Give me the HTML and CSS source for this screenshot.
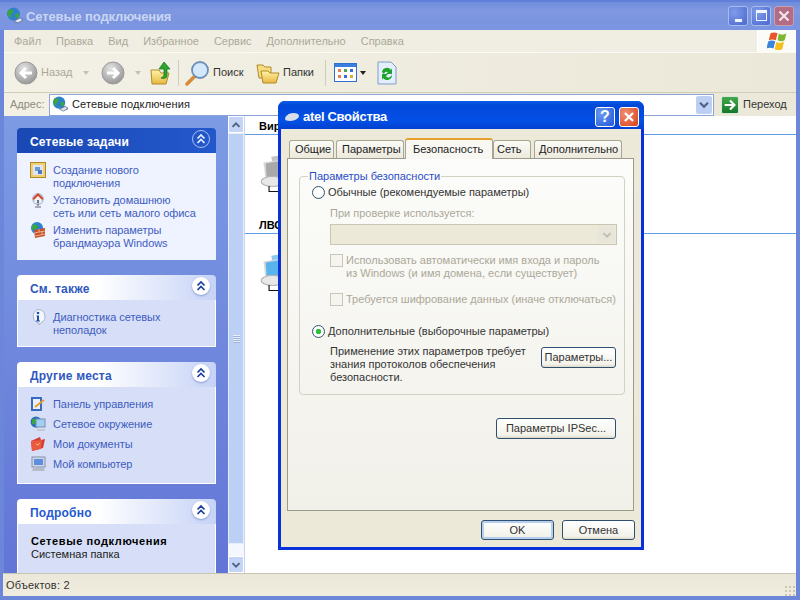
FILE: index.html
```html
<!DOCTYPE html>
<html lang="ru">
<head>
<meta charset="utf-8">
<title>Сетевые подключения</title>
<link rel="stylesheet" href="styles.css">
</head>
<body>
<svg class="defs" width="0" height="0" aria-hidden="true">
  <defs>
    <linearGradient id="gFolder" x1="0" y1="0" x2="0" y2="1"><stop offset="0" stop-color="#fff3a8"/><stop offset="1" stop-color="#e8b840"/></linearGradient>
    <radialGradient id="gGrey" cx=".4" cy=".3" r=".8"><stop offset="0" stop-color="#e4e4e4"/><stop offset="1" stop-color="#8e8e8e"/></radialGradient>
    <symbol id="net" viewBox="0 0 18 18">
      <path d="M6 12l9 3 2-1-1-2-7-3z" fill="#8ea0c8"/>
      <circle cx="7.500" cy="7" r="6.500" fill="#2f7fd0"/>
      <path d="M3 3c3-2 5 0 4 2S4 7 5 10 2 9 1.500 7 2 4 3 3zM9 7c2-1 4-1 4 1s-2 4-3 3 0-2-1-4z" fill="#36a83a"/>
      <path d="M8 14l6-3 3 2-5 3z" fill="#dfe6f2" stroke="#51627f" stroke-width=".7"/>
    </symbol>
    <symbol id="chev" viewBox="0 0 18 18">
      <path d="M5.500 8.500L9 5l3.500 3.500M5.500 13L9 9.500l3.500 3.500" fill="none" stroke="currentColor" stroke-width="1.700"/>
    </symbol>
    <symbol id="comp" viewBox="0 0 34 36">
      <path d="M11 4l18-3 3 1v16l-18 3z" fill="currentColor" opacity=".7"/>
      <path d="M4 9l19-3 2 1v16l-19 3z" fill="#d9d9d9"/>
      <path d="M6 10l17-3v15L7 25z" fill="currentColor"/>
      <ellipse cx="12" cy="26" rx="10" ry="4.500" fill="#e8e8e8" stroke="#b5b5b5"/>
      <path d="M9 30v5h25" fill="none" stroke="#111" stroke-width="1"/>
    </symbol>
  </defs>
</svg>

<div class="window">
  <header class="titlebar">
    <svg class="ico18"><use href="#net"/></svg>
    <span class="title-text">Сетевые подключения</span>
    <div class="winbtns">
      <span class="wb wb-blue"><i class="min-glyph"></i></span>
      <span class="wb wb-blue"><i class="max-glyph"></i></span>
      <span class="wb wb-red">
        <svg width="18" height="18" viewBox="0 0 18 18"><path d="M4.500 4.500l9 9M13.500 4.500l-9 9" stroke="#f2e6ea" stroke-width="2.200"/></svg>
      </span>
    </div>
  </header>

  <nav class="menubar">
    <div class="menus">
      <span>Файл</span><span>Правка</span><span>Вид</span><span>Избранное</span><span>Сервис</span><span>Дополнительно</span><span>Справка</span>
    </div>
    <div class="logo">
      <svg width="20" height="19" viewBox="0 2 17 16">
        <path d="M3 3c2-1 4-1 6 0l-1.500 6c-2-1-4-1-6 0z" fill="#e8562a"/>
        <path d="M10 3.500c2 1 4 1 6.500-.5L15 9c-2 1-4 1-6 0z" fill="#7cb82f"/>
        <path d="M1 10c2-1 4-1 6 0l-1.500 6c-2-1-4-1-6 0z" fill="#3c85d8"/>
        <path d="M8 10.500c2 1 4 1 6.500-.5L13 16.500c-2 1-4 1-6.500 0z" fill="#f5bf1e"/>
      </svg>
    </div>
  </nav>

  <div class="toolbar">
    <span class="tb-item tb-back">
      <svg width="24" height="24" viewBox="0 0 24 24"><circle cx="12" cy="12" r="11" fill="url(#gGrey)" stroke="#9a9a9a"/><path d="M18 12H8M12 7l-5 5 5 5" fill="none" stroke="#fff" stroke-width="3"/></svg>
      <span class="tb-dim">Назад</span><i class="caret caret-dim"></i>
    </span>
    <span class="tb-item tb-fwd">
      <svg width="24" height="24" viewBox="0 0 24 24"><circle cx="12" cy="12" r="11" fill="url(#gGrey)" stroke="#9a9a9a"/><path d="M6 12h10M12 7l5 5-5 5" fill="none" stroke="#fff" stroke-width="3"/></svg>
      <i class="caret caret-dim"></i>
    </span>
    <span class="tb-item tb-up">
      <svg width="22" height="24" viewBox="0 0 22 24"><path d="M1 9h8l2 3h8l-3 11H2z" fill="url(#gFolder)" stroke="#b08a28"/><path d="M14 1l6 7h-3v7c0 2-3 3-6 2 2-1 3-2 3-4V8H9z" fill="#2ba52b" stroke="#14701a" stroke-width=".7"/></svg>
    </span>
    <i class="tb-sep"></i>
    <span class="tb-item tb-search">
      <svg width="26" height="26" viewBox="0 0 26 26"><path d="M2 24l8-8" stroke="#d98a38" stroke-width="3.500" stroke-linecap="round"/><circle cx="15" cy="10" r="8" fill="#d3e9fb" stroke="#6d8fb8" stroke-width="1.800"/></svg>
      <span>Поиск</span>
    </span>
    <span class="tb-item tb-folders">
      <svg width="24" height="22" viewBox="0 0 24 22"><path d="M1 3h6l2 2h6v11H3z" fill="#f6dd80" stroke="#b08a28"/><path d="M5 9h7l2 2h9l-3 10H7z" fill="url(#gFolder)" stroke="#b08a28"/></svg>
      <span>Папки</span>
    </span>
    <i class="tb-sep"></i>
    <span class="tb-item tb-views">
      <svg width="23" height="19" viewBox="0 0 23 19"><rect x=".5" y=".5" width="22" height="18" fill="#fff" stroke="#2f6fd0"/><rect x="1" y="1" width="21" height="3" fill="#3a7fe0"/><g fill="#e8804a"><rect x="4" y="6" width="3" height="3"/><rect x="4" y="12" width="3" height="3"/></g><g fill="#4aa84a"><rect x="10" y="6" width="3" height="3"/></g><g fill="#3a6fd0"><rect x="16" y="6" width="3" height="3"/><rect x="10" y="12" width="3" height="3"/></g><rect x="16" y="12" width="3" height="3" fill="#d8b030"/></svg>
      <i class="caret"></i>
    </span>
    <span class="tb-item tb-sync">
      <svg width="20" height="24" viewBox="0 0 20 24"><path d="M1 1h13l5 5v17H1z" fill="#e4eefc" stroke="#7f9cc8"/><path d="M5 11a5 5 0 0 1 9-2l1-2v6h-6l2-2a3 3 0 0 0-4 2zM15 14a5 5 0 0 1-9 3l-1 2v-6h6l-2 2a3 3 0 0 0 4 1z" fill="#1fa32a"/></svg>
    </span>
  </div>

  <div class="addressbar">
    <span class="addr-label">Адрес:</span>
    <div class="addr-field">
      <svg class="ico16"><use href="#net"/></svg>
      <span class="addr-text">Сетевые подключения</span>
      <span class="addr-drop"><svg width="16" height="16" viewBox="0 0 18 18"><path d="M4.500 6.500L9 11l4.500-4.500" fill="none" stroke="#4d6185" stroke-width="2.400"/></svg></span>
    </div>
    <span class="go-btn"><svg width="16" height="16" viewBox="0 0 18 18"><path d="M3 9h11M9 4l5 5-5 5" fill="none" stroke="#fff" stroke-width="2.400"/></svg></span>
    <span class="go-label">Переход</span>
  </div>

  <main class="main">
    <aside class="sidebar">
      <section class="panel panel-primary">
        <div class="panel-head"><span class="panel-title">Сетевые задачи</span><span class="collapse"><svg width="18" height="18"><use href="#chev"/></svg></span></div>
        <ul class="panel-body task-list">
          <li>
            <svg class="task-ico" viewBox="0 0 16 16"><rect x=".5" y=".5" width="15" height="15" fill="#f0d070" stroke="#b08a28"/><rect x="3" y="3" width="10" height="10" fill="#dce6f8"/><path d="M5 5h5v4H5z" fill="#6f98d8"/><path d="M8 8h4v4H8z" fill="#4f78c0"/></svg>
            <span>Создание нового<br>подключения</span>
          </li>
          <li>
            <svg class="task-ico" viewBox="0 0 16 16"><circle cx="8" cy="7" r="6" fill="#b8c4d8"/><path d="M8 1L2.500 6.500 4 8l4-4 4 4 1.500-1.500z" fill="#d8442a"/><path d="M4.500 7.500L8 4l3.500 3.500V11h-7z" fill="#f4f0e8"/><rect x="7" y="8" width="2" height="3" fill="#5a78b0"/><path d="M8 12v2M5 15h6" stroke="#667" stroke-width="1.200"/></svg>
            <span>Установить домашнюю<br>сеть или сеть малого офиса</span>
          </li>
          <li>
            <svg class="task-ico" viewBox="0 0 16 16"><circle cx="7" cy="6" r="6" fill="#2f7fd0"/><path d="M2 3c3-1 6 0 6 2s-3 2-6 3z" fill="#3aa83e"/><path d="M4 8l11-2v8L5 16z" fill="#c8502c"/><path d="M4 11l11-2M5 14l10-2M9 7v3M12 9v3" stroke="#f0c8a0" stroke-width=".8"/></svg>
            <span>Изменить параметры<br>брандмауэра Windows</span>
          </li>
        </ul>
      </section>

      <section class="panel">
        <div class="panel-head"><span class="panel-title">См. также</span><span class="collapse"><svg width="18" height="18"><use href="#chev"/></svg></span></div>
        <ul class="panel-body task-list">
          <li>
            <svg class="task-ico" viewBox="0 0 16 16"><path d="M8 .5a7 7 0 0 1 3 13.300L9 16v-2A7 7 0 0 1 8 .5z" fill="#f4f6fb" stroke="#a8b4cc"/><circle cx="8" cy="4" r="1.300" fill="#1c4fa8"/><path d="M6.500 6.500H9v5h1v1H6v-1h1v-4h-.5z" fill="#1c4fa8"/></svg>
            <span>Диагностика сетевых<br>неполадок</span>
          </li>
        </ul>
      </section>

      <section class="panel">
        <div class="panel-head"><span class="panel-title">Другие места</span><span class="collapse"><svg width="18" height="18"><use href="#chev"/></svg></span></div>
        <ul class="panel-body task-list places">
          <li>
            <svg class="task-ico" viewBox="0 0 16 16"><rect x="1" y="1" width="11" height="14" fill="#3a6ac0"/><rect x="3" y="3" width="7" height="10" fill="#e8eefa"/><path d="M5 11l9-7" stroke="#e0a030" stroke-width="2"/></svg>
            <span>Панель управления</span>
          </li>
          <li>
            <svg class="task-ico" viewBox="0 0 16 16"><circle cx="6" cy="6" r="5.500" fill="#2a6ec0"/><path d="M2 3c3-1 5 0 4 3s-3 2-4 2z" fill="#38a63c"/><rect x="6" y="3" width="9" height="8" fill="#9fd0f4" stroke="#7a90b0"/><path d="M7 13h8v2H7z" fill="#c4c8d0"/></svg>
            <span>Сетевое окружение</span>
          </li>
          <li>
            <svg class="task-ico" viewBox="0 0 16 16"><path d="M1 5l9-4 1 3 4-1-2 9-11 3z" fill="#d83a34"/><path d="M1 5l11-1-1 9-9 2z" fill="#ea5a40"/><path d="M6 8l2 1 2-2" stroke="#f6c65a" fill="none"/></svg>
            <span>Мои документы</span>
          </li>
          <li>
            <svg class="task-ico" viewBox="0 0 16 16"><rect x="2" y="1" width="13" height="10" fill="#cfd6e6" stroke="#8490ac"/><rect x="4" y="3" width="9" height="6" fill="#5f8fdc"/><path d="M3 12h11l1 3H2z" fill="#b4bac8"/></svg>
            <span>Мой компьютер</span>
          </li>
        </ul>
      </section>

      <section class="panel panel-last">
        <div class="panel-head"><span class="panel-title panel-title-details">Подробно</span><span class="collapse"><svg width="18" height="18"><use href="#chev"/></svg></span></div>
        <div class="panel-body details">
          <strong>Сетевые подключения</strong>
          <span>Системная папка</span>
        </div>
      </section>
    </aside>

    <div class="scrollbar">
      <span class="sb-btn"><svg width="16" height="16" viewBox="0 0 18 18"><path d="M4.500 11.500L9 7l4.500 4.500" fill="none" stroke="#4d6185" stroke-width="2.400"/></svg></span>
      <div class="sb-thumb"><i class="grip"></i></div>
      <div class="sb-track"></div>
      <span class="sb-btn"><svg width="16" height="16" viewBox="0 0 18 18"><path d="M4.500 6.500L9 11l4.500-4.500" fill="none" stroke="#4d6185" stroke-width="2.400"/></svg></span>
    </div>

    <div class="content">
      <h3 class="group-head">Вир</h3>
      <div class="group-item"><svg class="comp comp-grey" width="38" height="41"><use href="#comp"/></svg></div>
      <h3 class="group-head">ЛВС</h3>
      <div class="group-item"><svg class="comp comp-blue" width="38" height="41"><use href="#comp"/></svg></div>
    </div>
  </main>

  <footer class="statusbar"><span>Объектов: 2</span><i class="resize-grip"></i></footer>
</div>

<div class="dialog">
  <header class="dlg-title">
    <svg width="16" height="12" viewBox="0 0 16 12"><path d="M1 8c0-3 4-6 8-6s6 1 6 3-4 5-9 5c-3 0-5-1-5-2z" fill="#d8dfe8"/></svg>
    <span class="dlg-title-text">atel Свойства</span>
    <span class="dlg-btn dlg-help">?</span>
    <span class="dlg-btn dlg-close"><svg width="18" height="18" viewBox="0 0 20 20"><path d="M5.500 5.500l9 9M14.500 5.500l-9 9" stroke="#fff" stroke-width="2.400"/></svg></span>
  </header>
  <div class="dlg-body">
    <div class="tabs">
      <span class="tab tab-general">Общие</span>
      <span class="tab tab-params">Параметры</span>
      <span class="tab tab-active">Безопасность</span>
      <span class="tab tab-net">Сеть</span>
      <span class="tab tab-extra">Дополнительно</span>
    </div>
    <div class="tab-pane">
      <fieldset class="group">
        <legend>Параметры безопасности</legend>
        <div class="radio-row"><i class="radio"></i><span>Обычные (рекомендуемые параметры)</span></div>
        <div class="sub-block">
          <div class="dim verify-label">При проверке используется:</div>
          <div class="select-box"><span class="select-arrow"><svg width="14" height="14" viewBox="0 0 18 18"><path d="M4.500 6.500L9 11l4.500-4.500" fill="none" stroke="#c0bdb0" stroke-width="2.400"/></svg></span></div>
          <div class="check-row check-first"><i class="check"></i><span class="dim">Использовать автоматически имя входа и пароль<br>из Windows (и имя домена, если существует)</span></div>
          <div class="check-row check-second"><i class="check"></i><span class="dim">Требуется шифрование данных (иначе отключаться)</span></div>
        </div>
        <div class="radio-row radio-second"><i class="radio radio-on"></i><span>Дополнительные (выборочные параметры)</span></div>
        <div class="advanced">
          <p>Применение этих параметров требует<br>знания протоколов обеспечения<br>безопасности.</p>
          <button class="btn btn-params" type="button">Параметры...</button>
        </div>
      </fieldset>
      <div class="ipsec-row"><button class="btn btn-ipsec" type="button">Параметры IPSec...</button></div>
    </div>
    <div class="dlg-actions">
      <button class="btn btn-action btn-default" type="button">OK</button>
      <button class="btn btn-action" type="button">Отмена</button>
    </div>
  </div>
</div>
</body>
</html>
```
FILE: styles.css
```css
* { box-sizing: border-box; }
html, body { margin: 0; padding: 0; width: 800px; height: 600px; overflow: hidden; }
body { position: relative; font: 11px/13px "Liberation Sans", Arial, sans-serif; color: #222; background: #fff; }
.defs { position: absolute; }
i { display: block; font-style: normal; }
ul { list-style: none; margin: 0; padding: 0; }

.window { width: 800px; height: 600px; display: flex; flex-direction: column; background: #6c86da; padding: 0 4px 4px; }

.titlebar { height: 30px; margin: 0 -4px; padding: 0 6px; flex: none; display: flex; align-items: center; gap: 2px;
  background: linear-gradient(#6f8cdc 0, #8098e0 30%, #7a94de 70%, #7b95e2 100%); border-top: 2px solid #5f7fd8; }
.title-text { font-size: 13px; font-weight: bold; color: #c9d6f3; letter-spacing: -.12px; }
.ico18 { width: 18px; height: 18px; }
.ico16 { width: 17px; height: 17px; flex: none; }
.winbtns { margin-left: auto; display: flex; gap: 3px; }
.wb { width: 20px; height: 20px; border-radius: 3px; border: 1px solid #a8bcec; display: flex; justify-content: center; align-items: flex-start; }
.wb-blue { background: radial-gradient(circle at 30% 30%, #7f9ce8, #4a66d0); }
.wb-red { background: #b26c84; border-color: #c4a0b4; align-items: center; }
.min-glyph { width: 7px; height: 3px; background: #f0f4fc; margin-top: 12px; }
.max-glyph { width: 11px; height: 11px; border: 1px solid #f0f4fc; border-top-width: 3px; margin-top: 3px; }

.menubar { height: 23px; flex: none; display: flex; background: #f0eee2; border-bottom: 1px solid #fbfaf4; }
.menus { flex: 1; display: flex; gap: 15px; padding: 5px 0 0 10px; color: #aca899; }
.logo { width: 39px; background: #fbfbf8; border-left: 1px solid #fff; display: flex; align-items: center; justify-content: center; }

.toolbar { height: 40px; flex: none; display: flex; align-items: center; background: linear-gradient(90deg, #f3f1e6, #ebe8d9); border-bottom: 1px solid #cfccb8; padding-left: 9px; }
.tb-item { display: flex; align-items: center; gap: 3px; color: #333; flex: none; }
.tb-dim { color: #aca899; }
.caret { width: 0; height: 0; border: 3px solid transparent; border-top: 4px solid #222; border-bottom: 0; }
.caret-dim { border-top-color: #c4c1b0; margin-left: 7px; }
.tb-back { width: 87px; padding-left: 1px; }
.tb-fwd { width: 50px; padding-left: 1px; }
.tb-up { width: 28px; }
.tb-sep { width: 1px; height: 26px; background: #cfccb8; margin-right: 4px; flex: none; }
.tb-search { width: 73px; padding-left: 2px; gap: 2px; }
.tb-folders { width: 69px; }
.tb-views { width: 43px; margin-left: 4px; }
.tb-sync { width: 24px; }

.addressbar { height: 23px; flex: none; display: flex; align-items: center; background: linear-gradient(90deg, #f3f1e6, #ebe8d9); padding-left: 6px; }
.addr-label { width: 39px; flex: none; color: #8f8c7e; }
.addr-field { width: 665px; height: 22px; flex: none; background: #fff; border: 1px solid #8ea6d6; display: flex; align-items: center; padding-left: 2px; gap: 3px; }
.addr-text { color: #222; flex: 1; letter-spacing: .15px; }
.addr-drop { width: 16px; height: 18px; background: #bcd0f4; border-radius: 2px; margin-right: 1px; display: flex; align-items: center; justify-content: center; }
.go-btn { width: 18px; height: 18px; margin-left: 7px; background: linear-gradient(#44a84c, #14782a); border-radius: 2px; border: 1px solid #d8e8d8; flex: none; display: flex; }
.go-label { margin-left: 4px; color: #333; }

.main { flex: 1; min-height: 0; display: flex; background: #fff; overflow: hidden; }
.sidebar { width: 224px; flex: none; padding: 12px 12px 0 13px; display: flex; flex-direction: column; gap: 15px; background: linear-gradient(#7c9be4, #6375d6); overflow: hidden; }

.panel { flex: none; }
.panel-head { height: 25px; display: flex; align-items: center; justify-content: space-between; padding: 0 6px 0 13px; border-radius: 4px 4px 0 0; background: linear-gradient(90deg, #fff 40%, #c6d3f7); }
.panel-title { font-weight: bold; font-size: 12px; color: #2f58c0; letter-spacing: .2px; padding-top: 3px; }
.panel-title-details { color: #1f5ad0; }
.collapse { width: 18px; height: 18px; margin-bottom: 3px; border-radius: 50%; background: #fff; box-shadow: 0 1px 2px #8a9ad0; color: #1c3f9c; display: block; }
.panel-body { background: #d6dff7; border: 1px solid #fff; border-top: 0; }

.panel-primary .panel-head { background: linear-gradient(90deg, #1a48b4, #2358cc); }
.panel-primary .panel-title { color: #fff; }
.panel-primary .collapse { background: transparent; border: 1px solid #a9c0f2; box-shadow: none; color: #e8f0ff; }
.panel-primary .collapse svg { display: block; margin: -1px; }
.panel-primary .panel-body { background: #eff3ff; border-color: #eff3ff; }

.task-list { padding: 11px 6px 9px 12px; display: flex; flex-direction: column; gap: 4px; color: #3e5cc0; letter-spacing: -.05px; }
.task-list li { display: flex; gap: 7px; }
.task-ico { width: 16px; height: 16px; flex: none; margin-top: -2px; }
.places { gap: 6px; padding-bottom: 11px; }

.panel-last .panel-body { padding: 11px 12px 12px 13px; display: flex; flex-direction: column; }
.details strong { color: #000; letter-spacing: .6px; }
.details span { color: #222; }

.scrollbar { width: 17px; flex: none; display: flex; flex-direction: column; background: #fff; border-right: 1px solid #c8d4ec; }
.sb-btn { height: 17px; flex: none; background: #c4d4f6; border: 1px solid #fff; border-radius: 2px; display: flex; align-items: center; justify-content: center; }
.sb-thumb { flex: 1; background: #bcd0f6; border: 1px solid #e6edfb; display: flex; align-items: center; justify-content: center; }
.grip { width: 7px; height: 8px; background: repeating-linear-gradient(#e8eefc 0 1px, #9fb2dc 1px 2px); }
.sb-track { height: 12px; flex: none; background: #f4f7fd; }

.content { flex: 1; padding: 4px 0 0 14px; overflow: hidden; }
.group-head { margin: 0 0 0 -14px; padding-left: 14px; height: 15px; font: bold 11px/13px "Liberation Sans", Arial, sans-serif; color: #000; border-bottom: 1px solid #5f9be6; white-space: nowrap; }
.group-item { height: 84px; padding-top: 17px; }
.comp { display: block; }
.comp-grey { color: #a9a9a9; }
.comp-blue { color: #59b4ee; }

.statusbar { height: 23px; flex: none; margin: 0 0 0 -1px; padding: 0 1px 0 3px; display: flex; align-items: center; justify-content: space-between; background: linear-gradient(#ebe8d9, #f0ede0); border-top: 1px solid #c8c5b2; color: #333; letter-spacing: .2px; }
.resize-grip { width: 11px; height: 11px; align-self: flex-end; background: radial-gradient(circle, #c8c5b2 1px, transparent 1px) 0 0 / 4px 4px; }

.dialog { position: absolute; left: 278px; top: 101px; width: 366px; height: 449px; display: flex; flex-direction: column; background: #0831d9; border-radius: 7px 7px 0 0; }
.dlg-title { height: 28px; flex: none; display: flex; align-items: center; padding: 3px 5px 0 6px; gap: 3px; border-radius: 7px 7px 0 0; background: linear-gradient(#0a5ce8, #0148d8 15%, #0450e6 70%, #0240d0); }
.dlg-title-text { font-size: 13px; font-weight: bold; color: #fff; flex: 1; letter-spacing: -.3px; }
.dlg-btn { width: 20px; height: 20px; border: 1px solid #fff; border-radius: 3px; display: flex; align-items: center; justify-content: center; margin-left: 1px; }
.dlg-help { background: radial-gradient(circle at 30% 30%, #6a9af0, #2456d8); color: #fff; font: bold 16px/1 "Liberation Sans", sans-serif; }
.dlg-close { background: radial-gradient(circle at 30% 30%, #f09070, #d8401c); }
.dlg-body { flex: 1; margin: 0 3px 3px; background: #ece9d8; padding: 8px 6px 0; display: flex; flex-direction: column; min-height: 0; }

.tabs { height: 21px; flex: none; display: flex; align-items: flex-end; padding-left: 2px; position: relative; z-index: 1; }
.tab { height: 18px; line-height: 17px; flex: none; background: linear-gradient(#fbfbf7, #ece9dc); border: 1px solid #a8a594; border-bottom: 0; border-radius: 3px 3px 0 0; color: #222; padding-left: 5px; }
.tab-general { width: 45px; margin-right: 2px; }
.tab-params { width: 68px; padding-left: 5px; margin-right: 1px; }
.tab-active { width: 88px; height: 21px; padding-left: 7px; background: #f8f7f2; border-top: 2px solid #e6a030; line-height: 18px; margin-bottom: -1px; position: relative; z-index: 2; }
.tab-net { width: 38px; padding-left: 3px; margin-right: 3px; }
.tab-extra { width: 88px; padding-left: 4px; }

.tab-pane { height: 353px; flex: none; margin-right: 1px; border: 1px solid #9c9a8a; background: linear-gradient(#fcfcfa, #f1f0e9); padding: 11px 8px 0 11px; }
.group { margin: 0; padding: 0 0 9px 12px; height: 225px; border: 1px solid #d4d0c2; border-radius: 4px; }
.group legend { padding: 0 1px; margin-left: -4px; color: #2a4dc8; line-height: 13px; }

.radio-row { display: flex; align-items: center; gap: 3px; height: 13px; color: #333; margin-top: 3px; }
.radio { width: 13px; height: 13px; border-radius: 50%; border: 1px solid #2f5470; background: radial-gradient(circle at 40% 40%, #fff 55%, #d9d6c8); flex: none; }
.radio-on { background: radial-gradient(circle, #2fbf3a 0 2.500px, #fff 3px); }
.radio-second { margin-top: 19px; }
.sub-block { padding-left: 18px; padding-right: 7px; }
.dim { color: #aca899; }
.verify-label { margin-top: 8px; }
.select-box { height: 21px; margin-top: 4px; border: 1px solid #c9c6b6; background: #ece9d8; display: flex; justify-content: flex-end; padding: 1px; }
.select-arrow { width: 17px; background: #e8e6da; display: flex; align-items: center; justify-content: center; }
.check-row { display: flex; gap: 3px; }
.check { width: 13px; height: 13px; border: 1px solid #c9c6b6; background: #f5f4ee; flex: none; }
.check-first { margin-top: 9px; }
.check-second { margin-top: 13px; }
.advanced { display: flex; padding: 7px 8px 0 18px; justify-content: space-between; color: #333; }
.advanced p { margin: 0; }
.btn { height: 21px; padding: 0; font: 11px/13px "Liberation Sans", Arial, sans-serif; color: #333; background: linear-gradient(#fff, #f3f2ea 85%, #dcd8c8); border: 1px solid #2f4f6f; border-radius: 3px; }
.btn-params { width: 75px; margin-top: 2px; }
.ipsec-row { display: flex; justify-content: flex-end; margin-top: 23px; padding-right: 9px; }
.btn-ipsec { width: 120px; }
.dlg-actions { display: flex; justify-content: flex-end; gap: 8px; margin-top: 9px; }
.btn-action { width: 73px; height: 20px; }
.btn-default { box-shadow: inset 0 0 0 2px #b8cef0; }
```
